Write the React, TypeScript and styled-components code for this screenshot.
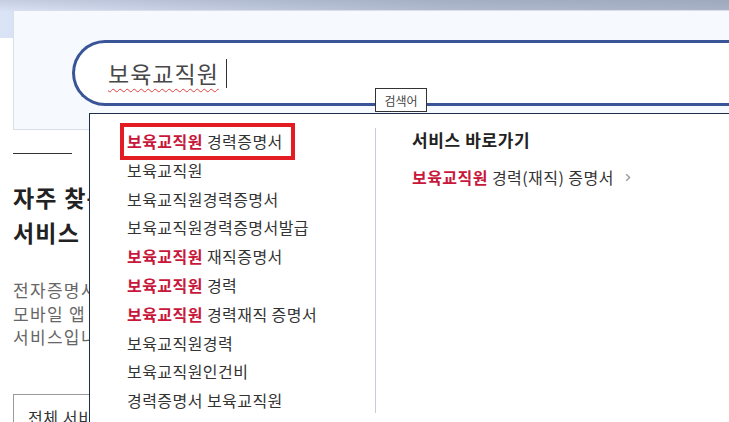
import React from "react";
import styled, { createGlobalStyle } from "styled-components";

const GlobalStyle = createGlobalStyle`
  html, body {
    margin: 0;
    padding: 0;
    background: #ffffff;
  }
  body {
    font-family: "Noto Sans CJK KR", "Noto Sans", sans-serif;
    overflow: hidden;
  }
`;

const RED = "#c8173a";

const Page = styled.div`
  position: relative;
  width: 729px;
  height: 422px;
  overflow: hidden;
  background: #ffffff;
`;

const HeaderBand = styled.div`
  height: 38px;
  background:
    linear-gradient(180deg, rgba(120, 130, 150, 0.22) 0, rgba(255, 255, 255, 0) 12px),
    linear-gradient(90deg, #dbe4f7 0%, #c8d1e5 25%, #b1bcd0 60%, #a9b4c8 100%);
`;

const SearchPanel = styled.div`
  margin: -28px 0 0 13px;
  width: 760px;
  height: 120px;
  box-sizing: border-box;
  padding: 29px 0 0 58px;
  background: #f6f9fe;
  border: 1px solid #d9dee9;
  border-right: none;
`;

const SearchBox = styled.div`
  display: flex;
  align-items: center;
  height: 66px;
  box-sizing: border-box;
  padding-left: 33px;
  background: #ffffff;
  border: 3px solid #3a5597;
  border-right: none;
  border-radius: 33px 0 0 33px;
`;

const QueryText = styled.span`
  font-size: 23px;
  letter-spacing: 1px;
  line-height: 30px;
  color: #484848;
  text-decoration: underline wavy #e2403f;
  text-decoration-thickness: 1px;
  text-underline-offset: 5px;
`;

const Caret = styled.span`
  display: inline-block;
  width: 1px;
  height: 29px;
  margin-left: 7px;
  background: #333333;
`;

const Content = styled.div`
  padding: 23px 0 0 13px;
  white-space: nowrap;
`;

const Rule = styled.div`
  width: 59px;
  height: 1px;
  background: #333333;
`;

const Heading = styled.h2`
  margin: 26px 0 0;
  font-size: 23px;
  letter-spacing: 1.2px;
  line-height: 35px;
  font-weight: 700;
  color: #222222;
`;

const Lead = styled.p`
  margin: 28px 0 0;
  font-size: 17px;
  letter-spacing: 1.3px;
  line-height: 23.5px;
  color: #666666;
`;

const AllButton = styled.div`
  margin-top: 45px;
  width: 180px;
  height: 60px;
  box-sizing: border-box;
  padding: 10px 0 0 14px;
  border: 1px solid #9a9a9a;
  font-size: 16px;
  letter-spacing: 0.6px;
  line-height: 24px;
  color: #333333;
`;

const Tooltip = styled.div`
  position: absolute;
  left: 375px;
  top: 88px;
  z-index: 3;
  width: 52px;
  height: 24px;
  box-sizing: border-box;
  display: flex;
  align-items: center;
  justify-content: center;
  background: #ffffff;
  border: 1px solid #333333;
  font-size: 12px;
  color: #444444;
`;

const Dropdown = styled.div`
  position: absolute;
  left: 89px;
  top: 113px;
  z-index: 2;
  width: 700px;
  height: 330px;
  display: flex;
  background: #ffffff;
  border-top: 1px solid #1f2e4c;
  border-left: 1px solid #1f2e4c;
`;

const SuggestList = styled.ul`
  list-style: none;
  margin: 0;
  width: 285px;
  box-sizing: border-box;
  padding: 13px 0 0 37px;
`;

const Suggest = styled.li`
  height: 28.8px;
  font-size: 16px;
  letter-spacing: 0.45px;
  line-height: 28.8px;
  color: #333333;
  white-space: nowrap;
`;

const Boxed = styled.span`
  display: inline-block;
  margin: -4px 0 -4px -7px;
  padding: 0 8px 0 3px;
  border: 4px solid #e31b23;
`;

const Hit = styled.b`
  font-weight: 600;
  color: ${RED};
`;

const Divider = styled.div`
  width: 1px;
  height: 285px;
  margin-top: 14px;
  background: #c9ccd4;
`;

const Shortcuts = styled.div`
  padding: 14px 0 0 36px;
`;

const ShortcutTitle = styled.h3`
  margin: 0;
  font-size: 17px;
  letter-spacing: 0.6px;
  line-height: 24px;
  font-weight: 700;
  color: #222222;
`;

const ShortcutLink = styled.a`
  display: flex;
  align-items: center;
  gap: 11px;
  margin-top: 13px;
  font-size: 16px;
  letter-spacing: 0.45px;
  line-height: 24px;
  color: #333333;
  text-decoration: none;
  white-space: nowrap;
`;

const Chevron = () => (
  <svg width="6" height="9" viewBox="0 0 6 9" fill="none">
    <path d="M1.2 1.2L4.6 4.5L1.2 7.8" stroke="#9a9a9a" strokeWidth="1.4" />
  </svg>
);

const Q = "보육교직원";

const suggestions: { hit?: boolean; rest: string; boxed?: boolean }[] = [
  { hit: true, rest: " 경력증명서", boxed: true },
  { rest: "보육교직원" },
  { rest: "보육교직원경력증명서" },
  { rest: "보육교직원경력증명서발급" },
  { hit: true, rest: " 재직증명서" },
  { hit: true, rest: " 경력" },
  { hit: true, rest: " 경력재직 증명서" },
  { rest: "보육교직원경력" },
  { rest: "보육교직원인건비" },
  { rest: "경력증명서 보육교직원" },
];

export default function App() {
  return (
    <Page>
      <GlobalStyle />
      <HeaderBand />
      <SearchPanel>
        <SearchBox>
          <QueryText>{Q}</QueryText>
          <Caret />
        </SearchBox>
      </SearchPanel>

      {/* page content; the suggestion layer lies over its right part */}
      <Content>
        <Rule />
        <Heading>
          자주 찾는
          <br />
          서비스
        </Heading>
        <Lead>
          전자증명서
          <br />
          모바일 앱 및
          <br />
          서비스입니다
        </Lead>
        <AllButton>전체 서비스</AllButton>
      </Content>

      <Tooltip>검색어</Tooltip>

      <Dropdown>
        <SuggestList>
          {suggestions.map((s, i) => {
            const body = (
              <>
                {s.hit && <Hit>{Q}</Hit>}
                {s.rest}
              </>
            );
            return <Suggest key={i}>{s.boxed ? <Boxed>{body}</Boxed> : body}</Suggest>;
          })}
        </SuggestList>
        <Divider />
        <Shortcuts>
          <ShortcutTitle>서비스 바로가기</ShortcutTitle>
          <ShortcutLink href="#">
            <span>
              <Hit>{Q}</Hit> 경력(재직) 증명서
            </span>
            <Chevron />
          </ShortcutLink>
        </Shortcuts>
      </Dropdown>
    </Page>
  );
}
